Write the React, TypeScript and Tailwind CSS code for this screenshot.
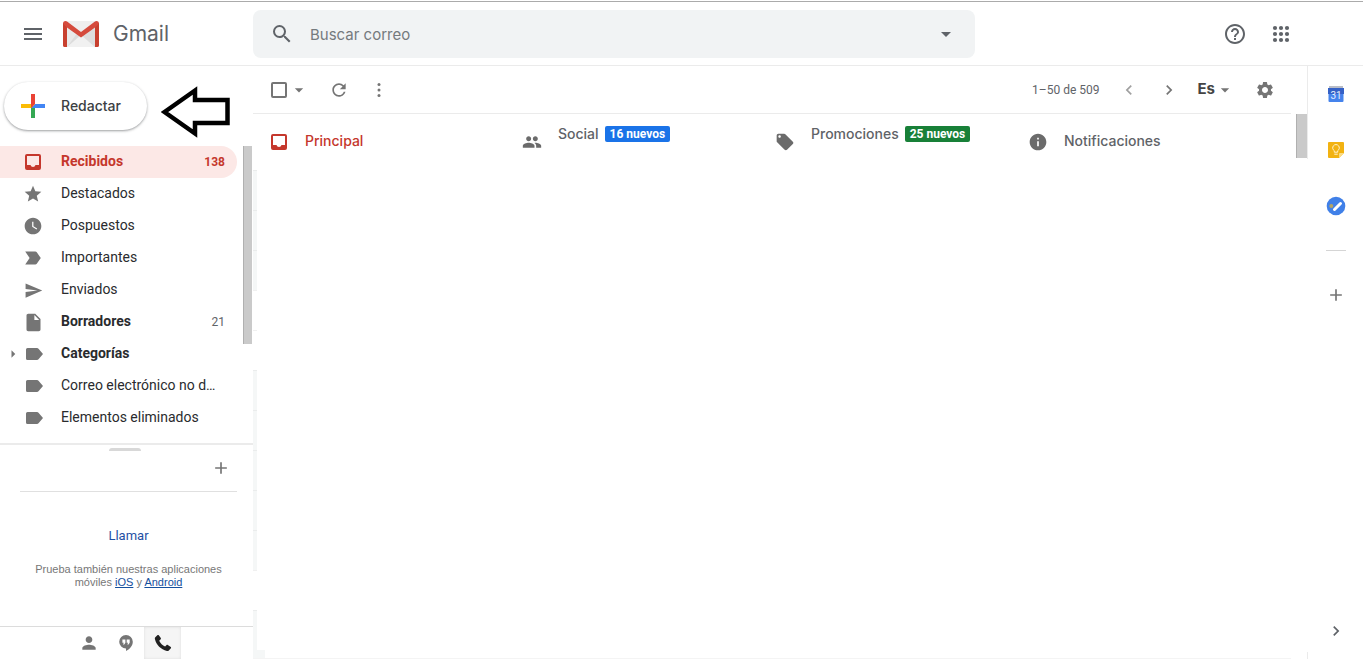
import type { ReactNode } from "react";
import {
  MdArrowDropDown,
  MdArrowRight,
  MdChevronLeft,
  MdChevronRight,
  MdAdd,
  MdGroup,
  MdHelpOutline,
  MdInfo,
  MdInsertDriveFile,
  MdLabelImportant,
  MdLocalOffer,
  MdMenu,
  MdPerson,
  MdRefresh,
  MdSearch,
  MdSend,
  MdSettings,
  MdStar,
  MdWatchLater,
} from "react-icons/md";

const InboxIcon = () => (
  <svg width="20" height="20" viewBox="0 0 20 20" fill="currentColor">
    <path
      fillRule="evenodd"
      d="M4 2h12a2 2 0 0 1 2 2v12a2 2 0 0 1-2 2H4a2 2 0 0 1-2-2V4a2 2 0 0 1 2-2zm0 2v9h3.5a2.6 2.6 0 0 0 5 0H16V4z"
    />
  </svg>
);

const LabelIcon = () => (
  <svg width="22" height="20" viewBox="0 0 22 20" fill="currentColor">
    <path d="M5.500 4H15c.6 0 1.100.3 1.500.8L21 10l-4.500 5.200c-.4.500-.9.800-1.500.800H5.500A1.500 1.500 0 0 1 4 14.500v-9A1.500 1.500 0 0 1 5.500 4z" />
  </svg>
);

const AppsIcon = () => (
  <svg width="24" height="24" viewBox="0 0 24 24" fill="currentColor">
    {[6, 12, 18].map((y) =>
      [6, 12, 18].map((x) => <circle key={`${x}-${y}`} cx={x} cy={y} r="2.100" />)
    )}
  </svg>
);

const MoreIcon = () => (
  <svg width="20" height="20" viewBox="0 0 20 20" fill="currentColor">
    {[4.5, 10, 15.5].map((y) => (
      <circle key={y} cx="10" cy={y} r="1.500" />
    ))}
  </svg>
);

const PhoneIcon = () => (
  <svg width="18" height="18" viewBox="0 0 18 18" fill="currentColor">
    <path d="M1.300 3.200 3.600 1.100c.4-.3.9-.3 1.200.1l2 2.900c.3.400.2.900-.1 1.200L5.200 6.700c1.200 2.500 3.300 4.600 5.900 5.900l1.500-1.500c.3-.3.8-.4 1.200-.1l3 2c.4.300.4.800.1 1.200l-2.100 2.300c-.5.500-1.200.7-1.900.5C6.900 15.600 2.300 11 .900 5.100.700 4.400.800 3.700 1.300 3.200z" />
  </svg>
);

const GmailLogo = () => (
  <svg width="36" height="26" viewBox="0 0 36 26">
    <path d="M2 0h32v26H2z" fill="#e9e9e9" />
    <path d="M4 26 18 13l14 13z" fill="#f1f1f1" />
    <path d="M4 26 15 11l3 3z" fill="#dcdcdc" />
    <path d="M18 14 32 26V6z" fill="#dedede" />
    <path d="M2 0h32L18 12z" fill="#efefef" />
    <path
      d="M0 2.5C0 .8 1.300 0 2.500 0c.8 0 1.300.3 1.900.7L18 11 31.600.7c.6-.4 1.100-.7 1.900-.7C34.700 0 36 .8 36 2.500V24a2 2 0 0 1-2 2h-2V6.500L18 16.500 4 6.500V26H2a2 2 0 0 1-2-2z"
      fill="#d54b3d"
    />
    <path d="M0 2.500V24a2 2 0 0 0 2 2h2V6.500z" fill="#c8402f" />
    <path d="M36 2.500V24a2 2 0 0 1-2 2h-2V6.500z" fill="#c8402f" />
  </svg>
);

const ComposeIcon = () => (
  <svg width="24" height="24" viewBox="6 6 24 24">
    <path fill="#34A853" d="M16 16v14h4V20z" />
    <path fill="#4285F4" d="M30 16H20l-4 4h14z" />
    <path fill="#FBBC05" d="M6 16v4h10l4-4z" />
    <path fill="#EA4335" d="M20 16V6h-4v14z" />
  </svg>
);

const ArrowPointer = () => (
  <svg width="70" height="52" viewBox="0 0 70 52" className="shrink-0">
    <path
      d="M3.500 26 34 4.500V14h32.500v23H34v10.500z"
      fill="#fff"
      stroke="#000"
      strokeWidth="4.500"
    />
  </svg>
);

const HangoutsIcon = () => (
  <svg width="14" height="16" viewBox="0 0 14 16">
    <path
      d="M7 0a6.800 6.800 0 0 0 0 13.600V16c3.500-1.700 6.800-5 6.800-9.200A6.800 6.800 0 0 0 7 0z"
      fill="#757575"
    />
    <path
      d="M3.400 4.500h3v3.200L5.200 9.600H4l.8-1.900H3.400zM7.700 4.500h3v3.200L9.500 9.600H8.300l.8-1.900H7.700z"
      fill="#fff"
    />
  </svg>
);

const CalendarIcon = () => (
  <svg width="16" height="16" viewBox="0 0 16 16">
    <path d="M1 0h14v4H1z" fill="#b9bdc7" />
    <path d="M0 2h16v6H0z" fill="#3561c6" />
    <path d="M.5 8h15v7a1 1 0 0 1-1 1h-13a1 1 0 0 1-1-1z" fill="#4583ec" />
    <text
      x="8"
      y="13"
      textAnchor="middle"
      fontSize="10"
      fontFamily="Roboto, sans-serif"
      fill="#e8f0fe"
    >
      31
    </text>
  </svg>
);

const KeepIcon = () => (
  <svg width="16" height="16" viewBox="0 0 16 16">
    <path d="M1 0h14a1 1 0 0 1 1 1v10l-5 5H1a1 1 0 0 1-1-1V1a1 1 0 0 1 1-1z" fill="#f2b211" />
    <path d="M16 11h-4a1 1 0 0 0-1 1v4z" fill="#fbdc83" />
    <path
      d="M6.300 9.200V8.700a3.300 3.300 0 1 1 3.400 0v1.500H6.300zM6.300 12.200h3.400"
      fill="none"
      stroke="#fff3cf"
    />
  </svg>
);

const TasksIcon = () => (
  <svg width="20" height="20" viewBox="0 0 20 20">
    <circle cx="10" cy="10" r="9.300" fill="#4080e8" />
    <path d="M8.500 13.500 14.500 7.500" stroke="#fff" strokeWidth="3" strokeLinecap="round" />
    <circle cx="5.300" cy="10" r="2" fill="#b5a463" />
  </svg>
);

type Folder = {
  label: string;
  icon: ReactNode;
  count?: number;
  bold?: boolean;
  active?: boolean;
  expandable?: boolean;
};

const folders: Folder[] = [
  { label: "Recibidos", icon: <InboxIcon />, count: 138, bold: true, active: true },
  { label: "Destacados", icon: <MdStar size={20} /> },
  { label: "Pospuestos", icon: <MdWatchLater size={20} /> },
  { label: "Importantes", icon: <MdLabelImportant size={22} /> },
  { label: "Enviados", icon: <MdSend size={19} /> },
  { label: "Borradores", icon: <MdInsertDriveFile size={21} />, count: 21, bold: true },
  { label: "Categorías", icon: <LabelIcon />, bold: true, expandable: true },
  { label: "Correo electrónico no deseado", icon: <LabelIcon /> },
  { label: "Elementos eliminados", icon: <LabelIcon /> },
  { label: "Elementos enviados", icon: <LabelIcon /> },
];

const FolderRow = ({ label, icon, count, bold, active, expandable }: Folder) => (
  <a
    href="#"
    className={`flex h-8 shrink-0 items-center rounded-r-full pr-3 ${
      active ? "bg-[#fce8e6] text-[#c5372c]" : "text-[#2a2b2e]"
    }`}
  >
    <span className="flex w-[22px] shrink-0 justify-end text-[#757575]">
      {expandable && <MdArrowRight size={18} />}
    </span>
    <span
      className={`flex w-[22px] shrink-0 justify-center ${active ? "" : "text-[#757575]"}`}
    >
      {icon}
    </span>
    <span
      className={`mr-1 ml-[17px] min-w-0 flex-1 truncate pb-[2px] text-sm ${bold ? "font-bold" : ""}`}
    >
      {label}
    </span>
    {count && (
      <span className={`ml-2 text-xs ${active ? "font-bold" : "text-[#5f6368]"}`}>
        {count}
      </span>
    )}
  </a>
);

const Sidebar = () => (
  <aside className="flex w-[253px] shrink-0 flex-col">
    <div className="flex h-20 shrink-0 items-center gap-[14px] pl-1">
      <button className="flex h-12 w-[143px] shrink-0 items-center gap-4 rounded-full bg-white pl-[17px] font-[Inter,sans-serif] text-sm font-medium text-[#3c4043] shadow-[0_1px_2px_rgba(60,64,67,0.3),0_1px_3px_rgba(60,64,67,0.25)]">
        <ComposeIcon />
        Redactar
      </button>
      <div className="pt-3">
        <ArrowPointer />
      </div>
    </div>

    <div className="flex min-h-0 flex-1 overflow-hidden">
      <nav className="mr-[6px] flex w-[237px] flex-col">
        {folders.map((folder) => (
          <FolderRow key={folder.label} {...folder} />
        ))}
      </nav>
      <div className="h-[198px] w-[9px] border-l border-[#b0b0b0] bg-[#cacaca]" />
    </div>

    <section className="flex h-[183px] shrink-0 flex-col border-t-2 border-[#ebebeb]">
      <div className="mt-[3px] ml-[109px] h-[3px] w-8 rounded-t-sm bg-[#d8d8d8]" />
      <div className="mr-4 ml-5 flex h-[41px] items-center justify-end border-b border-[#e0e0e0] pr-[6px] pb-[6px]">
        <button aria-label="Nueva conversación" className="text-[#757575]">
          <MdAdd size={20} />
        </button>
      </div>
      <div className="mr-4 ml-5 flex flex-col items-center pt-[34px] text-center">
        <a href="#" className="text-[13px] leading-5 text-[#1f4fa3]">
          Llamar
        </a>
        <p className="mt-[17px] font-['Liberation_Sans',sans-serif] text-[11px] leading-[13px] text-[#777]">
          Prueba también nuestras aplicaciones móviles{" "}
          <a href="#" className="text-[#15509e] underline">
            iOS
          </a>{" "}
          y{" "}
          <a href="#" className="text-[#15509e] underline">
            Android
          </a>
        </p>
      </div>
    </section>

    <div className="flex h-[33px] shrink-0 border-t border-[#dcdcdc] pl-[70px] text-[#757575]">
      <button aria-label="Contactos" className="flex w-[37px] items-center justify-center">
        <MdPerson size={20} />
      </button>
      <button aria-label="Hangouts" className="flex w-[37px] items-center justify-center">
        <HangoutsIcon />
      </button>
      <button
        aria-label="Teléfono"
        className="flex w-[37px] items-center justify-center bg-[#f5f5f5] text-[#212121] shadow-[inset_0_0_3px_#ddd]"
      >
        <PhoneIcon />
      </button>
    </div>
  </aside>
);

const Header = () => (
  <header className="flex h-[65px] shrink-0 items-center border-t border-b border-t-[#ababab] border-b-[#ebebeb] text-[#5f6368]">
    <div className="flex w-[253px] shrink-0 items-center pl-[21px]">
      <button aria-label="Menú principal">
        <MdMenu size={24} />
      </button>
      <a href="#" className="ml-[18px] flex items-center gap-[14px] pt-px">
        <GmailLogo />
        <span className="font-[Inter,sans-serif] text-[21px]">Gmail</span>
      </a>
    </div>
    <div className="flex h-12 max-w-[722px] flex-1 items-center rounded-lg bg-[#f1f3f4] px-[17px]">
      <button aria-label="Buscar">
        <MdSearch size={24} />
      </button>
      <input
        aria-label="Buscar correo"
        placeholder="Buscar correo"
        className="ml-4 min-w-0 flex-1 bg-transparent pt-[3px] font-[Inter,sans-serif] text-[15px] outline-none placeholder:text-[#757a7e]"
      />
      <button aria-label="Opciones de búsqueda">
        <MdArrowDropDown size={24} />
      </button>
    </div>
    <div className="mr-[70px] ml-auto flex items-center gap-[22px]">
      <button aria-label="Ayuda">
        <MdHelpOutline size={24} />
      </button>
      <button aria-label="Aplicaciones de Google">
        <AppsIcon />
      </button>
    </div>
  </header>
);

const Toolbar = () => (
  <div className="mr-4 flex h-12 shrink-0 items-center border-b border-[#ebebeb] pr-4 pl-[18px] text-[#757575]">
    <input
      type="checkbox"
      aria-label="Seleccionar"
      className="size-4 appearance-none rounded-xs border-2 border-[#757575]"
    />
    <button aria-label="Opciones de selección" className="ml-[2px]">
      <MdArrowDropDown size={20} />
    </button>
    <button aria-label="Actualizar" className="ml-5">
      <MdRefresh size={20} />
    </button>
    <button aria-label="Más" className="ml-5">
      <MoreIcon />
    </button>
    <span className="ml-auto text-xs text-[#5f6368]">1–50 de 509</span>
    <button aria-label="Más recientes" className="ml-5 text-[#a0a0a0]">
      <MdChevronLeft size={20} />
    </button>
    <button aria-label="Más antiguos" className="ml-5">
      <MdChevronRight size={20} />
    </button>
    <button className="ml-[18px] flex items-center font-[Inter,sans-serif] text-[15px] font-bold text-[#444]">
      Es
      <MdArrowDropDown size={20} className="text-[#757575]" />
    </button>
    <button aria-label="Configuración" className="ml-5">
      <MdSettings size={20} />
    </button>
  </div>
);

type TabProps = {
  label: string;
  icon: ReactNode;
  badge?: string;
  badgeClass?: string;
  active?: boolean;
};

const tabs: TabProps[] = [
  { label: "Principal", icon: <InboxIcon />, active: true },
  { label: "Social", icon: <MdGroup size={20} />, badge: "16 nuevos", badgeClass: "bg-[#1a73e8]" },
  {
    label: "Promociones",
    icon: <MdLocalOffer size={20} />,
    badge: "25 nuevos",
    badgeClass: "bg-[#188038]",
  },
  { label: "Notificaciones", icon: <MdInfo size={22} /> },
];

const Tab = ({ label, icon, badge, badgeClass, active }: TabProps) => (
  <button
    role="tab"
    aria-selected={!!active}
    className={`flex h-14 w-[253px] items-center pl-4 font-[Inter,sans-serif] text-sm font-medium ${
      active ? "text-[#c5372c]" : "text-[#5f6368]"
    }`}
  >
    <span className={`flex w-5 shrink-0 justify-center ${active ? "" : "text-[#6b6b6b]"}`}>
      {icon}
    </span>
    <span className={`ml-4 flex items-center gap-[6px] ${badge ? "pb-4" : "pb-[2px]"}`}>
      {label}
      {badge && (
        <span
          className={`rounded-xs px-[5px] font-[Roboto,sans-serif] text-xs leading-4 font-bold text-white ${badgeClass}`}
        >
          {badge}
        </span>
      )}
    </span>
  </button>
);

// Left edge of the message rows, 40px each; false leaves the row blank
const rows = [true, true, true, false, false, true, true, true, true, true, false, true];

const Mail = () => (
  <main className="flex min-w-0 flex-1 flex-col">
    <Toolbar />
    <div className="flex min-h-0 flex-1">
      <div className="mr-[6px] flex min-w-0 flex-1 flex-col border-b border-[#f4f4f4]">
        <div role="tablist" className="flex shrink-0">
          {tabs.map((tab) => (
            <Tab key={tab.label} {...tab} />
          ))}
        </div>
        <div className="min-h-0 flex-1 overflow-hidden">
          {rows.map((filled, i) => (
            <div
              key={i}
              className={`h-10 w-1 border-t ${
                filled ? "border-[#eaecec] bg-[#f5f7f7]" : "border-[#f0f0f0]"
              }`}
            />
          ))}
          <div className="h-2 w-3 bg-[#f5f7f7]" />
        </div>
      </div>
      <div className="-ml-px h-11 w-[11px] border-l border-[#b0b0b0] bg-[#cacaca]" />
    </div>
  </main>
);

const SidePanel = () => (
  <aside className="flex w-14 shrink-0">
    <div className="flex w-px flex-col justify-between">
      <div className="h-[93px] bg-[#ebebeb]" />
      <div className="h-[7px] bg-[#ebebeb]" />
    </div>
    <div className="flex flex-1 flex-col items-center text-[#757575]">
      <button aria-label="Calendar" className="flex h-14 items-center justify-center">
        <CalendarIcon />
      </button>
      <button aria-label="Keep" className="flex h-14 items-center justify-center">
        <KeepIcon />
      </button>
      <button aria-label="Tasks" className="flex h-14 items-center justify-center">
        <TasksIcon />
      </button>
      <hr className="mt-4 w-5 border-[#d5d5d5]" />
      <button aria-label="Obtener complementos" className="mt-[34px]">
        <MdAdd size={20} />
      </button>
      <button aria-label="Ocultar panel lateral" className="mt-auto mb-[18px] text-[#5f6368]">
        <MdChevronRight size={20} />
      </button>
    </div>
  </aside>
);

const App = () => {
  return (
    <div className="flex h-screen flex-col bg-white pt-px pr-[3px] pb-[9px] font-[Roboto,sans-serif]">
      <Header />
      <div className="flex min-h-0 flex-1">
        <Sidebar />
        <Mail />
        <SidePanel />
      </div>
    </div>
  );
};

export default App;
